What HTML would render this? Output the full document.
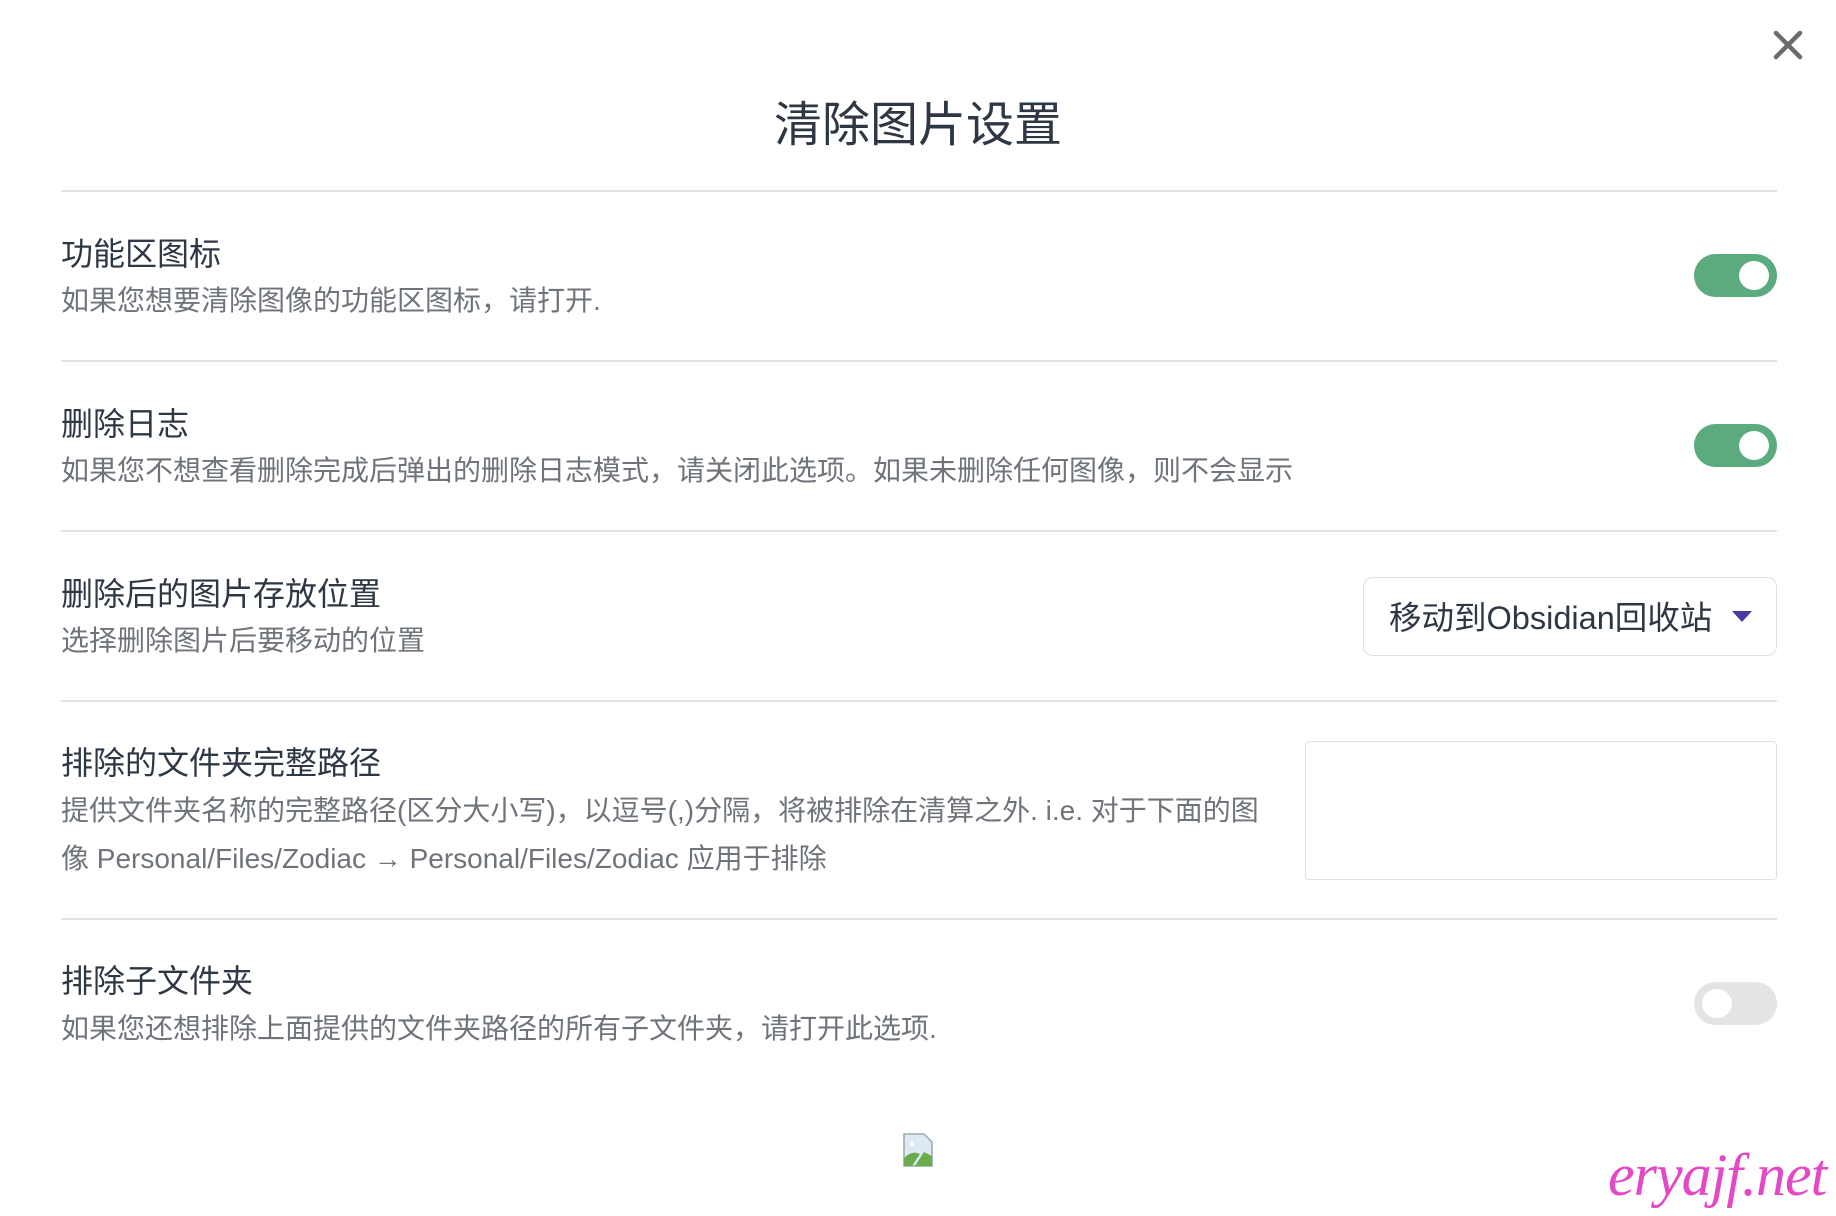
<!DOCTYPE html>
<html><head><meta charset="utf-8"><style>
body{margin:0;width:1836px;height:1216px;background:#fff;position:relative;overflow:hidden;font-family:"Liberation Sans","Noto Sans CJK SC",sans-serif;}
.a{position:absolute;white-space:nowrap;}
.t{font-size:32px;color:#2e3744;height:40px;line-height:40px;left:61px;}
.d{font-size:28px;color:#6f747a;height:40px;line-height:40px;left:61px;}
.hr{position:absolute;left:61px;width:1716px;height:2px;background:#e3e3e3;}
.tg{position:absolute;left:1694px;width:83px;height:43px;border-radius:22px;background:#5cab7f;}
.tg::after{content:"";position:absolute;right:8px;top:7px;width:30px;height:29px;border-radius:50%;background:#fff;}
.tg.off{background:#e4e4e4;}
.tg.off::after{left:8px;right:auto;}
</style></head><body>
<svg class="a" style="left:1773px;top:30px" width="30" height="30" viewBox="0 0 30 30"><path d="M3 3L27 27M27 3L3 27" stroke="#6b6b6b" stroke-width="4.5" stroke-linecap="round"/></svg>
<div class="a" style="left:0;width:1836px;text-align:center;top:98px;height:56px;line-height:56px;font-size:48px;color:#2e3744;">清除图片设置</div>
<div class="hr" style="top:190px"></div>
<div class="a t" style="top:234px">功能区图标</div>
<div class="a d" style="top:281px">如果您想要清除图像的功能区图标，请打开.</div>
<div class="tg" style="top:254px"></div>
<div class="hr" style="top:360px"></div>
<div class="a t" style="top:404px">删除日志</div>
<div class="a d" style="top:451px">如果您不想查看删除完成后弹出的删除日志模式，请关闭此选项。如果未删除任何图像，则不会显示</div>
<div class="tg" style="top:424px"></div>
<div class="hr" style="top:530px"></div>
<div class="a t" style="top:574px">删除后的图片存放位置</div>
<div class="a d" style="top:621px">选择删除图片后要移动的位置</div>
<div class="a" style="left:1363px;top:577px;width:412px;height:77px;border:1.5px solid #e0e0e0;border-radius:10px;"></div>
<div class="a" style="left:1389px;top:598px;height:40px;line-height:40px;font-size:32.5px;color:#2e3744;">移动到Obsidian回收站</div>
<svg class="a" style="left:1731px;top:609px" width="22" height="14" viewBox="0 0 22 14"><path d="M1 2H21L11 13Z" fill="#4b3aa3"/></svg>
<div class="hr" style="top:700px"></div>
<div class="a t" style="top:743px">排除的文件夹完整路径</div>
<div class="a d" style="top:791px">提供文件夹名称的完整路径(区分大小写)，以逗号(,)分隔，将被排除在清算之外. i.e. 对于下面的图</div>
<div class="a d" style="top:839px">像 Personal/Files/Zodiac → Personal/Files/Zodiac 应用于排除</div>
<div class="a" style="left:1305px;top:741px;width:470px;height:137px;border:1.5px solid #e0e0e0;border-radius:4px;"></div>
<div class="hr" style="top:918px"></div>
<div class="a t" style="top:961px">排除子文件夹</div>
<div class="a d" style="top:1009px">如果您还想排除上面提供的文件夹路径的所有子文件夹，请打开此选项.</div>
<div class="tg off" style="top:982px"></div>
<svg class="a" style="left:902px;top:1132px" width="32" height="36" viewBox="0 0 32 36"><path d="M2 2H22L30 10V34H2Z" fill="#dfe8f5" stroke="#9aa" stroke-width="1.5"/><path d="M2 34L2 26Q10 18 18 22L10 34Z" fill="#6aac4c"/><path d="M13 34L22 20L30 24V34Z" fill="#6aac4c"/><path d="M10 8L13 14H7Z" fill="#fff"/></svg>
<div class="a" style="left:1608px;top:1140px;font-family:'Liberation Serif',serif;font-style:italic;font-size:60px;color:#e448c4;line-height:70px;letter-spacing:-1px;">eryajf.net</div>
</body></html>
